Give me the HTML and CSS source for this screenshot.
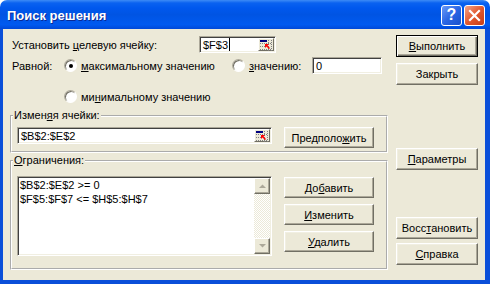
FILE: index.html
```html
<!DOCTYPE html>
<html lang="ru">
<head>
    <meta charset="UTF-8">
    <title>Поиск решения</title>
    <link rel="stylesheet" href="styles.css">
</head>
<body>
    <div class="window">
        <div class="titlebar">
            <span class="title">Поиск решения</span>
            <div class="caption-buttons">
                <span class="cap-btn help">?</span>
                <span class="cap-btn close">
                    <svg width="19" height="19" viewBox="0 0 19 19"><path d="M5 5l9 9M14 5l-9 9" stroke="#fff" stroke-width="2.2" stroke-linecap="square"/></svg>
                </span>
            </div>
        </div>
        <div class="client">
            <div class="main">
                <div class="row row-target">
                    <span class="lbl lbl-target">Установить <u>ц</u>елевую ячейку:</span>
                    <div class="refedit ref-target">
                        <span class="ref-text">$F$3<span class="caret"></span></span>
                        <span class="ref-btn">
                            <svg width="14" height="12" viewBox="0 0 14 12">
                                <rect x="1" y="1" width="7" height="2" fill="#000080"/>
                                <path d="M1 4.5h11M1 7.5h5M1 10.5h11M9.5 1v11M12.5 1v11" stroke="#808080" stroke-dasharray="1 1"/>
                                <path d="M6 5h4l-1.5 1.5 2.5 2.5-1 1-2.5-2.5-1.5 1.5z" fill="#f00"/>
                            </svg>
                        </span>
                    </div>
                </div>
                <div class="row row-equal">
                    <span class="lbl lbl-equal">Равной:</span>
                    <span class="radio-opt opt-max"><span class="radio checked"></span><span><u>м</u>аксимальному значению</span></span>
                    <span class="radio-opt opt-val"><span class="radio"></span><span><u>з</u>начению:</span></span>
                    <span class="textbox val-box">0</span>
                </div>
                <div class="row row-min">
                    <span class="radio-opt"><span class="radio"></span><span>ми<u>н</u>имальному значению</span></span>
                </div>
                <fieldset class="group group-change">
                    <legend>Измен<u>я</u>я ячейки:</legend>
                    <div class="group-row">
                        <div class="refedit ref-change">
                            <span class="ref-text">$B$2:$E$2</span>
                            <span class="ref-btn">
                                <svg width="14" height="12" viewBox="0 0 14 12">
                                    <rect x="1" y="1" width="7" height="2" fill="#000080"/>
                                    <path d="M1 4.5h11M1 7.5h5M1 10.5h11M9.5 1v11M12.5 1v11" stroke="#808080" stroke-dasharray="1 1"/>
                                    <path d="M6 5h4l-1.5 1.5 2.5 2.5-1 1-2.5-2.5-1.5 1.5z" fill="#f00"/>
                                </svg>
                            </span>
                        </div>
                        <button class="btn btn-group">Предполо<u>ж</u>ить</button>
                    </div>
                </fieldset>
                <fieldset class="group group-limits">
                    <legend><u>О</u>граничения:</legend>
                    <div class="group-row">
                        <div class="listbox">
                            <div class="list-items">
                                <div>$B$2:$E$2 &gt;= 0</div>
                                <div>$F$5:$F$7 &lt;= $H$5:$H$7</div>
                            </div>
                            <div class="scrollbar">
                                <span class="scroll-btn">
                                    <svg width="7" height="4" viewBox="0 0 7 4"><path d="M0 4h7L3.5 0.5z" fill="#ACA899"/></svg>
                                </span>
                                <span class="scroll-track"></span>
                                <span class="scroll-btn">
                                    <svg width="7" height="4" viewBox="0 0 7 4"><path d="M0 0h7L3.5 3.5z" fill="#ACA899"/></svg>
                                </span>
                            </div>
                        </div>
                        <div class="btn-stack">
                            <button class="btn btn-group">До<u>б</u>авить</button>
                            <button class="btn btn-group"><u>И</u>зменить</button>
                            <button class="btn btn-group"><u>У</u>далить</button>
                        </div>
                    </div>
                </fieldset>
            </div>
            <div class="side">
                <button class="btn btn-side btn-default"><u>В</u>ыполнить</button>
                <button class="btn btn-side btn-close">Закрыть</button>
                <button class="btn btn-side btn-params"><u>П</u>араметры</button>
                <button class="btn btn-side btn-reset">Восс<u>т</u>ановить</button>
                <button class="btn btn-side btn-help"><u>С</u>правка</button>
            </div>
        </div>
    </div>
</body>
</html>
```

FILE: styles.css
```css
body {
    margin: 0;
    background: #fff;
    font-family: "Liberation Sans", Arial, sans-serif;
    font-size: 11px;
    color: #000;
}
.window {
    width: 490px;
    height: 284px;
    display: flex;
    flex-direction: column;
}
.titlebar {
    height: 29px;
    flex: none;
    display: flex;
    align-items: center;
    justify-content: space-between;
    padding: 0 5px 0 7px;
    border-radius: 7px 7px 0 0;
    background: linear-gradient(#3D8BF6, #0A62F0 3px, #0058EE 8px, #0054E3 50%, #005AF0 85%, #0048D8);
}
.title {
    color: #fff;
    font-weight: bold;
    font-size: 13px;
    text-shadow: 1px 1px #0A2A96;
    padding-top: 1px;
}
.caption-buttons {
    display: flex;
    gap: 2px;
    padding-top: 1px;
}
.cap-btn {
    width: 19px;
    height: 19px;
    border: 1px solid #fff;
    border-radius: 3px;
    display: flex;
    align-items: center;
    justify-content: center;
    color: #fff;
}
.help {
    background: linear-gradient(135deg, #6A9AF8, #2B66E4 50%, #1A50CC);
    font-weight: bold;
    font-size: 16px;
}
.close {
    background: linear-gradient(135deg, #F3A58A, #E2582E 50%, #C53D16);
}
.client {
    flex: 1;
    display: flex;
    background: #ECE9D8;
    border: solid #0A4FD9;
    border-width: 0 5px 4px 3px;
}
.main {
    width: 385px;
    flex: none;
    padding: 7px 0 0 7px;
    box-sizing: border-box;
}
.row {
    display: flex;
    align-items: center;
    height: 17px;
    padding-left: 2px;
}
.lbl-target {
    width: 187px;
}
.row-equal {
    margin-top: 4px;
}
.lbl-equal {
    width: 52px;
}
.opt-max {
    width: 168px;
}
.opt-val {
    width: 80px;
}
.row-min {
    margin-top: 14px;
    padding-left: 54px;
}
.radio-opt {
    display: flex;
    align-items: center;
    gap: 4px;
}
.radio {
    width: 11px;
    height: 11px;
    flex: none;
    border: 1px solid;
    border-color: #ACA899 #fff #fff #ACA899;
    border-radius: 50%;
    background: #fff;
    box-shadow: inset 1px 1px #716F64;
    display: flex;
    align-items: center;
    justify-content: center;
}
.radio.checked::after {
    content: "";
    width: 4px;
    height: 4px;
    border-radius: 50%;
    background: #000;
}
.textbox,
.refedit,
.listbox {
    box-sizing: border-box;
    background: #fff;
    border: 1px solid;
    border-color: #ACA899 #fff #fff #ACA899;
    box-shadow: inset 1px 1px #404040, inset -1px -1px #F1EFE2;
}
.textbox {
    height: 17px;
    padding: 2px 3px;
}
.val-box {
    width: 70px;
}
.refedit {
    height: 17px;
    display: flex;
    align-items: stretch;
    padding: 1px 1px 1px 1px;
}
.ref-target {
    width: 77px;
}
.ref-change {
    width: 255px;
}
.ref-text {
    flex: 1;
    padding: 1px 2px;
    display: flex;
    align-items: center;
}
.caret {
    width: 1px;
    height: 13px;
    background: #000;
    margin-left: 1px;
}
.ref-btn {
    width: 16px;
    flex: none;
    box-sizing: border-box;
    background: #ECE9D8;
    border: 1px solid;
    border-color: #fff #716F64 #716F64 #fff;
    display: flex;
    align-items: center;
    justify-content: center;
}
.group {
    box-sizing: border-box;
    width: 378px;
    min-width: 0;
    margin: 4px 0 0;
    padding: 5px 0 3px 5px;
    border: 2px groove #fff;
}
.group legend {
    padding: 0 1px;
    margin-left: -4px;
    line-height: 13px;
}
.group-limits {
    margin-top: 1px;
    padding-top: 9px;
    padding-bottom: 12px;
}
.group-row {
    display: flex;
    gap: 12px;
    align-items: flex-start;
}
.btn {
    box-sizing: border-box;
    background: #ECE9D8;
    border: 1px solid;
    border-color: #fff #716F64 #716F64 #fff;
    box-shadow: inset -1px -1px #ACA899, inset 1px 1px #F1EFE2;
    font: inherit;
    color: #000;
    padding: 0;
    text-align: center;
}
.btn-group {
    width: 90px;
    height: 21px;
}
.listbox {
    width: 255px;
    height: 80px;
    display: flex;
    padding: 1px;
}
.list-items {
    flex: 1;
    padding: 0 1px;
    line-height: 14px;
}
.scrollbar {
    width: 16px;
    display: flex;
    flex-direction: column;
}
.scroll-btn {
    height: 16px;
    box-sizing: border-box;
    background: #ECE9D8;
    border: 1px solid;
    border-color: #fff #716F64 #716F64 #fff;
    box-shadow: inset -1px -1px #ACA899;
    display: flex;
    align-items: center;
    justify-content: center;
}
.scroll-track {
    flex: 1;
    background: repeating-conic-gradient(#fff 0 25%, #ECE9D8 0 50%) 0 0 / 2px 2px;
}
.btn-stack {
    display: flex;
    flex-direction: column;
    gap: 6px;
    margin-top: 1px;
}
.side {
    padding-left: 8px;
    display: flex;
    flex-direction: column;
}
.btn-side {
    width: 82px;
    height: 22px;
}
.btn-default {
    margin-top: 6px;
    border: 1px solid #000;
    box-shadow: inset 1px 1px #fff, inset -1px -1px #716F64, inset -2px -2px #ACA899;
}
.btn-close {
    margin-top: 6px;
}
.btn-params {
    margin-top: 63px;
}
.btn-reset {
    margin-top: 47px;
}
.btn-help {
    margin-top: 4px;
}
```
